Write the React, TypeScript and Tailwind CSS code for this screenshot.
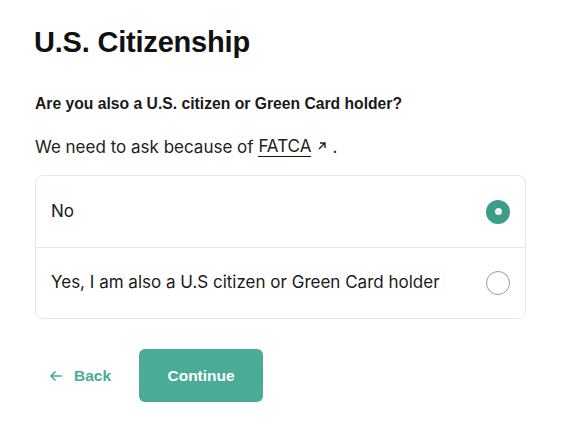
import React, { useState } from "react";

export default function App() {
  const [choice, setChoice] = useState<"no" | "yes">("no");
  const options: { id: "no" | "yes"; label: string }[] = [
    { id: "no", label: "No" },
    { id: "yes", label: "Yes, I am also a U.S citizen or Green Card holder" },
  ];
  return (
    <div
      className="w-[577px] h-[426px] bg-white text-[#111] px-[35px] pt-[24px]"
      style={{ fontFamily: '"Liberation Sans", Arial, sans-serif' }}
    >
      <h1 className="text-[29px] leading-[36px] font-semibold tracking-[-0.2px] text-[#111] -ml-[1px]">
        U.S. Citizenship
      </h1>
      <p className="mt-[33px] text-[15.7px] leading-[22px] font-bold text-[#1a1a1a]">
        Are you also a U.S. citizen or Green Card holder?
      </p>
      <p
        className="mt-[21px] text-[17px] leading-[22px] text-[#222] flex items-center"
        style={{ fontFamily: 'Inter, "Liberation Sans", sans-serif' }}
      >
        We need to ask because of&nbsp;
        <span className="border-b border-[#111] leading-[19px]">FATCA</span>
        <svg width="12" height="12" viewBox="0 0 12 12" className="ml-[5px] mr-[4px] mb-[3px]" fill="none" stroke="#222" strokeWidth="1.4">
          <path d="M3 9 L9 3 M4 3 H9 V8" />
        </svg>
        .
      </p>
      <div className="mt-[17px] w-[491px] border border-[#e6e6e6] rounded-[8px] bg-white">
        {options.map((o, i) => (
          <button
            key={o.id}
            onClick={() => setChoice(o.id)}
            className={`w-full h-[71px] flex items-center justify-between pl-[15px] pr-[15px] text-left ${
              i > 0 ? "border-t border-[#e6e6e6]" : ""
            }`}
          >
            <span
              className="text-[17px] text-[#1a1a1a]"
              style={{ fontFamily: 'Inter, "Liberation Sans", sans-serif' }}
            >
              {o.label}
            </span>
            {choice === o.id ? (
              <span className="w-[24px] h-[24px] rounded-full bg-[#3a9e87] flex items-center justify-center">
                <span className="w-[7px] h-[7px] rounded-full bg-[#f0f0f0]" />
              </span>
            ) : (
              <span className="w-[24px] h-[24px] rounded-full border border-[#9a9a9a]" />
            )}
          </button>
        ))}
      </div>
      <div className="mt-[30px] flex items-center">
        <button className="flex items-center gap-[11px] pl-[14px] text-[15.5px] font-bold text-[#4aab95]">
          <svg width="14" height="12" viewBox="0 0 14 12" fill="none" stroke="#4aab95" strokeWidth="1.6">
            <path d="M13 6 H2 M6.5 1.5 L2 6 L6.5 10.5" />
          </svg>
          Back
        </button>
        <button className="ml-[28px] w-[124px] h-[53px] rounded-[6px] bg-[#4aac96] text-white text-[15.5px] font-bold">
          Continue
        </button>
      </div>
    </div>
  );
}
